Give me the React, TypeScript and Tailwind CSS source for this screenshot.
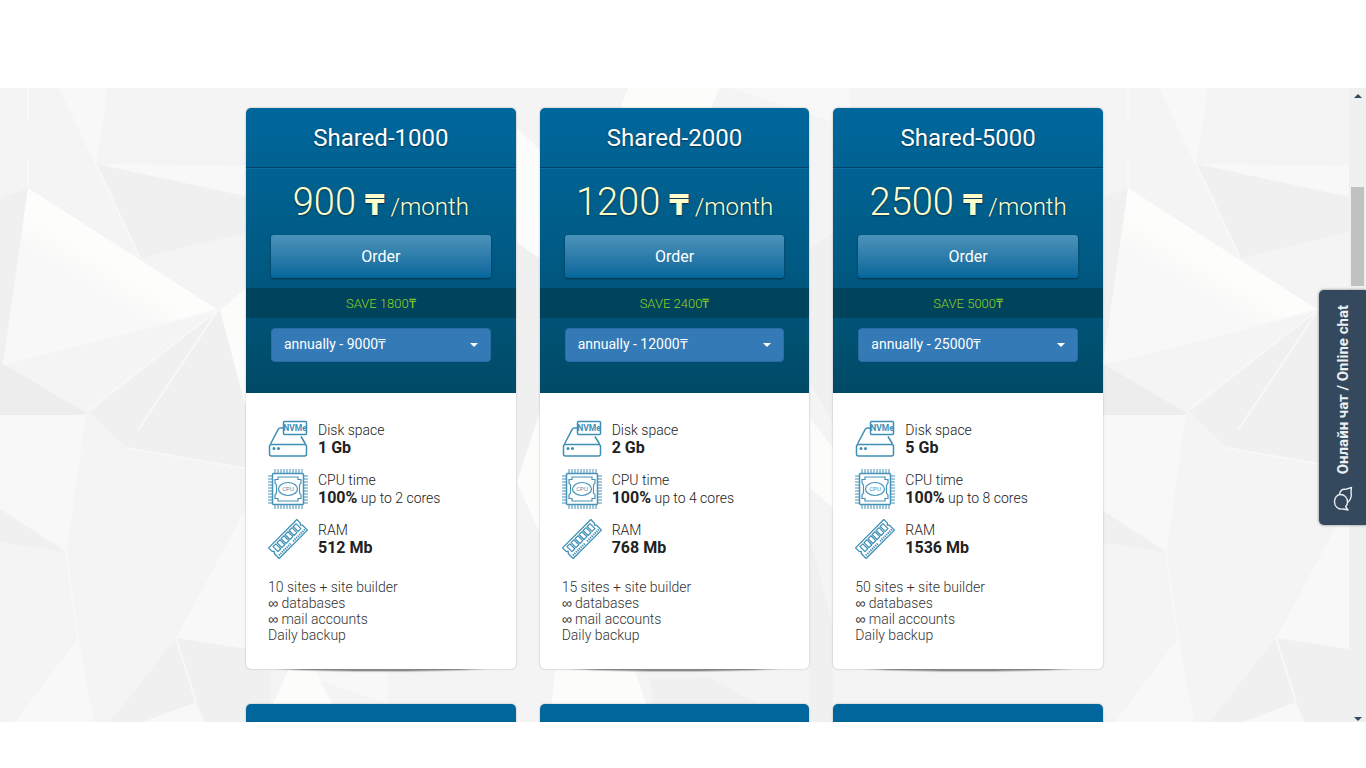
import type { ReactNode } from 'react'

type Plan = {
  name: string
  price: number
  disk: string
  cores: number
  ram: string
  sites: number
}

const plans: Plan[] = [
  { name: 'Shared-1000', price: 900, disk: '1 Gb', cores: 2, ram: '512 Mb', sites: 10 },
  { name: 'Shared-2000', price: 1200, disk: '2 Gb', cores: 4, ram: '768 Mb', sites: 15 },
  { name: 'Shared-5000', price: 2500, disk: '5 Gb', cores: 8, ram: '1536 Mb', sites: 50 },
]

function DiskIcon() {
  return (
    <svg viewBox="0 0 40 40" className="size-10" fill="none" stroke="#3f8fb5" strokeWidth="1.500" strokeLinejoin="round" aria-hidden="true">
      <path d="M15 9h-2.500q-1.500 0-2.200 1.200L2.500 25M33 17.500L37.500 25" />
      <rect x="1.500" y="25.500" width="37" height="11.500" rx="2" />
      <rect x="15.500" y="2.500" width="23" height="13" rx="1" />
      <circle cx="6" cy="29.500" r="0.800" fill="#3f8fb5" />
      <circle cx="10.500" cy="29.500" r="0.800" fill="#3f8fb5" />
      <text x="27" y="12.200" textAnchor="middle" fontSize="8.500" fontWeight="700" fontFamily="Roboto, sans-serif" fill="#3f8fb5" stroke="none">
        NVMe
      </text>
    </svg>
  )
}

function CpuIcon() {
  return (
    <svg viewBox="0 0 40 40" className="size-10" fill="none" stroke="#4792b8" strokeWidth="1.200" aria-hidden="true">
      <rect x="4.500" y="4.500" width="31" height="31" rx="1" strokeWidth="1.500" />
      <path d="M7 0v4M10 0v4M13 0v4M16 0v4M19 0v4M22 0v4M25 0v4M28 0v4M31 0v4M34 0v4M7 36v4M10 36v4M13 36v4M16 36v4M19 36v4M22 36v4M25 36v4M28 36v4M31 36v4M34 36v4" strokeWidth="1" />
      <path d="M0 7h4M0 10h4M0 13h4M0 16h4M0 19h4M0 22h4M0 25h4M0 28h4M0 31h4M0 34h4M36 7h4M36 10h4M36 13h4M36 16h4M36 19h4M36 22h4M36 25h4M36 28h4M36 31h4M36 34h4" strokeWidth="1" />
      <path d="M10 8h20v2.500h3V14l-1.500 2v8l1.500 2v3.500h-3V32H10v-2.500H7V26l1.500-2v-8L7 14v-3.500h3z" />
      <ellipse cx="20" cy="20" rx="9.500" ry="6.500" />
      <text x="20" y="22.200" textAnchor="middle" fontSize="6" fontFamily="Roboto, sans-serif" fill="#4792b8" stroke="none">
        CPU
      </text>
    </svg>
  )
}

function RamIcon() {
  return (
    <svg viewBox="0 0 40 40" className="size-10" fill="none" stroke="#3f8fb5" strokeWidth="1.300" strokeLinejoin="round" aria-hidden="true">
      <g transform="rotate(-45 20 20)">
        <path d="M0 12.500h40v5l-1.500 1.500 1.500 1.500v7H0v-7L1.500 19 0 17.500z" />
        <path d="M4 14.800h4v7H4zM9.700 14.800h4v7h-4zM15.400 14.800h4v7h-4zM21.100 14.800h4v7h-4zM26.800 14.800h4v7h-4zM32.500 14.800h4v7h-4z" strokeWidth="1.200" />
        <path d="M2 25.200h17M22 25.200h17" strokeWidth="2" strokeDasharray="1.300 0.900" />
      </g>
    </svg>
  )
}

function ChatIcon() {
  return (
    <svg viewBox="0 0 20 26" className="h-[26px] w-5" fill="none" stroke="#e8ecf0" strokeWidth="1.400" strokeLinejoin="round" aria-hidden="true">
      <path d="M7.500 8.500c4 0 7 3.200 7 7.300 0 2-.7 3.700-1.800 5L15 24l-4.500-1c-6 1-9-3-9-7.200s2.500-7.300 6-7.300z" />
      <path d="M6.500 8.500C7 5 9.500 3 12.500 3.300L18.500 1.500 18 6c.8 4-.3 8-3.500 10.500" />
    </svg>
  )
}

function Backdrop() {
  return (
    <svg className="absolute inset-0 size-full" aria-hidden="true">
      <defs>
        <linearGradient id="facet" gradientUnits="userSpaceOnUse" x1="125" y1="160" x2="85" y2="225">
          <stop offset="0.300" stopColor="#fdfdfb" />
          <stop offset="0.700" stopColor="#f8f8f8" />
        </linearGradient>
        <pattern id="facets" width="1100" height="634" patternUnits="userSpaceOnUse">
          <rect width="1100" height="634" fill="#f4f4f4" />
          <g fill="#f8f8f8">
            <path d="M60 0h48L96 76z" />
            <path d="M96 76l204 2v42z" />
            <path d="M0 327l85-1-19 138-66-43z" />
            <path d="M246 420l-70 130 130 20z" />
            <path d="M78 550L15 634h78z" />
            <path d="M142 634l54-20 9 20z" />
            <path d="M288 582h100v34z" />
            <path d="M730 0h120v40z" />
          </g>
          <g fill="#f0f0f0">
            <path d="M96 76l204 44v12l-160 38z" />
            <path d="M218 222L88 322l39 38 173 30V315z" />
            <path d="M0 421l66 43-66-10z" />
            <path d="M176 550l94 15v69h-65l-9-20-54 20h-32z" />
            <path d="M28 100L3 276H0V111z" />
            <path d="M517 155l23 16v150l-23 70z" />
            <path d="M810 160l23-15v190l-23-40z" />
            <path d="M810 450l23 90v94h-23z" />
            <path d="M650 590h60l80 44H655z" />
          </g>
          <path d="M0 274l88 48-3 5H0z" fill="#ededed" />
          <path d="M28 100l190 122L3 276z" fill="url(#facet)" />
          <path d="M3 276l215-54L88 326z" fill="#f4f4f4" />
          <g fill="#fcfcfa">
            <path d="M220 222l26-22v120z" />
            <path d="M517 40l23 22v108l-23-15z" />
            <path d="M540 325v120l-23-50z" />
            <path d="M628 0h92l-10 22h-90z" />
            <path d="M288 582h27l17 34h-59z" />
            <path d="M555 582h80l17 52H550z" />
            <path d="M810 330l23 30v60l-23-20z" />
          </g>
          <g stroke="#f8f8f8" strokeWidth="2" fill="none">
            <path d="M28 0v32M28 72v28M60 0l36 76 44 94M3 276l215-54M218 222L88 322M218 222l-80 120M85 326l-19 138 12 86 15 84M127 360l173 30M176 550l20 64" />
          </g>
        </pattern>
      </defs>
      <rect width="100%" height="100%" fill="url(#facets)" />
    </svg>
  )
}

function Spec({ icon, label, children }: { icon: ReactNode; label: string; children: ReactNode }) {
  return (
    <div className="flex h-10 items-center gap-[10px]">
      {icon}
      <div className="text-sm leading-[18px] font-light text-[#222]">
        <p>{label}</p>
        <p>{children}</p>
      </div>
    </div>
  )
}

function PlanCard({ plan }: { plan: Plan }) {
  return (
    <article className="relative isolate">
      <div className="absolute inset-x-[12px] -bottom-[2px] -z-10 h-3 rounded-[50%] bg-[#8f8f8f] shadow-[0_1px_1px_rgba(0,0,0,0.2)]" />
      <div className="overflow-hidden rounded-[5px] bg-white shadow-[0_0_2px_rgba(0,0,0,0.3)]">
        <header className="bg-linear-to-b from-[#00679c] via-[#005b85] to-[#004a66] pb-[31px] text-center">
          <h2 className="border-b border-[#00426a] pt-[15px] pb-[13px] text-2xl leading-[31px] text-white [text-shadow:0_1px_2px_rgba(0,0,0,0.5)]">
            {plan.name}
          </h2>
          <p className="flex h-[67px] items-baseline justify-center border-t border-[#0d6da0] pt-[9px] text-2xl leading-[48px] font-light text-[#ffffcc] [text-shadow:0_1px_2px_rgba(0,0,0,0.5)]">
            <span className="text-[38px]">{plan.price}</span>
            <span className="ml-[9px] font-['DejaVu_Sans',sans-serif] text-[28px] font-bold">₸</span>
            <span className="ml-[6px]">/month</span>
          </p>
          <button className="mx-[25px] block h-[43px] w-[calc(100%-50px)] rounded-[3px] bg-linear-to-b from-[#4a93ba] to-[#00669b] text-base text-white shadow-[0_1px_2px_rgba(0,0,0,0.5)]">
            Order
          </button>
          <p className="mt-[10px] bg-[#00435c] pt-[2px] text-[13px] leading-[28px] text-[#8fd31f] uppercase">
            <span className="font-light">Save {plan.price * 2}₸</span>
          </p>
          <div className="relative mx-[25px] mt-[10px]">
            <select
              aria-label={`Billing period for ${plan.name}`}
              className="block h-[34px] w-full appearance-none rounded-[4px] border border-[#2e6da4] bg-[#337ab7] px-3 pt-[5px] pb-[7px] text-sm leading-5 text-white"
            >
              <option>annually - {plan.price * 10}₸</option>
            </select>
            <span className="pointer-events-none absolute top-[15px] right-[13px] border-x-4 border-t-4 border-x-transparent border-t-white" />
          </div>
        </header>
        <div className="px-[22px] pt-[26px] pb-[26px]">
          <div className="flex flex-col gap-[10px]">
            <Spec icon={<DiskIcon />} label="Disk space">
              <strong className="text-base leading-[18px] font-bold">{plan.disk}</strong>
            </Spec>
            <Spec icon={<CpuIcon />} label="CPU time">
              <strong className="text-base leading-[18px] font-bold">100%</strong> up to {plan.cores} cores
            </Spec>
            <Spec icon={<RamIcon />} label="RAM">
              <strong className="text-base leading-[18px] font-bold">{plan.ram}</strong>
            </Spec>
          </div>
          <ul className="mt-5 text-sm leading-4 font-light text-[#333]">
            <li>{plan.sites} sites + site builder</li>
            <li>
              <span className="font-['Liberation_Sans',sans-serif] leading-none">∞</span> databases
            </li>
            <li>
              <span className="font-['Liberation_Sans',sans-serif] leading-none">∞</span> mail accounts
            </li>
            <li>Daily backup</li>
          </ul>
        </div>
      </div>
    </article>
  )
}

function ScrollRail() {
  return (
    <div className="relative flex w-[17px] shrink-0 flex-col items-center bg-[#f0f0f0]" aria-hidden="true">
      <span className="mt-[6px] border-x-4 border-b-4 border-x-transparent border-b-[#34495e]" />
      <span className="mt-[89px] h-[99px] w-[13px] bg-[#c1c1c1]" />
      <span className="mt-auto mb-[1px] border-x-4 border-t-4 border-x-transparent border-t-[#34495e]" />
    </div>
  )
}

export default function App() {
  return (
    <div className="flex h-screen flex-col bg-white pt-[88px] pb-[46px] font-['Roboto',sans-serif]">
      <div className="relative flex min-h-0 flex-1">
        <main className="relative flex-1 overflow-hidden">
          <Backdrop />
          <div className="relative mx-auto grid max-w-[857px] grid-cols-3 gap-x-6 gap-y-[35px] pt-5">
            {plans.map((plan) => (
              <PlanCard key={plan.name} plan={plan} />
            ))}
            {/* tops of the next row of plans */}
            {plans.map((plan) => (
              <div key={plan.name} className="h-[60px] rounded-t-[5px] bg-[#00669b] shadow-[0_0_2px_rgba(0,0,0,0.3)]" />
            ))}
          </div>
        </main>
        <ScrollRail />
        <button className="absolute top-[202px] right-0 flex h-[235px] w-[47px] flex-col items-center justify-between rounded-l-[5px] bg-[#34495e] pt-[15px] pb-[13px] text-[#ecf0f1] shadow-[0_0_3px_rgba(0,0,0,0.5)]">
          <span className="rotate-180 text-[15px] leading-5 font-bold [writing-mode:vertical-rl]">Онлайн чат / Online chat</span>
          <ChatIcon />
        </button>
      </div>
    </div>
  )
}
